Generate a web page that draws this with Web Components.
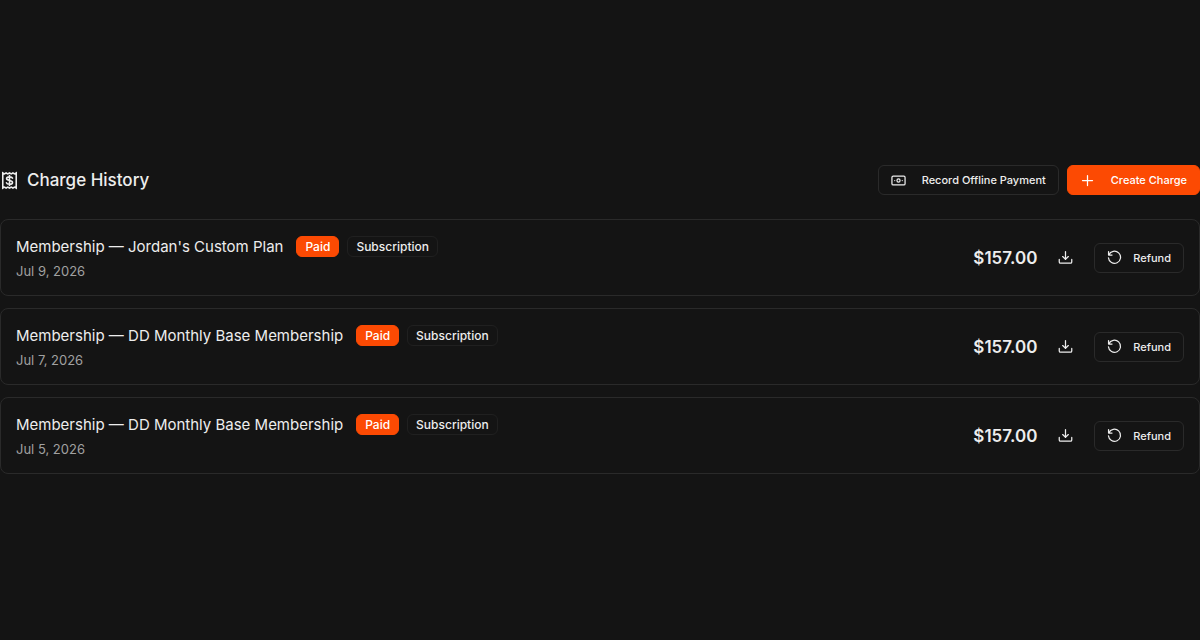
<!DOCTYPE html>
<html lang="en">
<head>
<meta charset="utf-8">
<meta name="viewport" content="width=device-width, initial-scale=1">
<title>Charge History</title>
<style>
	:root {
		--background: #141414;
		--border: #2a2a2a;
		--border-faint: #202020;
		--text: #ededed;
		--muted: #a1a1a1;
		--accent: #fc4a03;
	}

	body {
		margin: 0;
		padding-bottom: 1px;
		min-height: 100vh;
		display: flex;
		flex-direction: column;
		justify-content: center;
		box-sizing: border-box;
		background: var(--background);
		color: var(--text);
		font-family: Inter, "Liberation Sans", sans-serif;
	}
</style>
</head>
<body>

<charge-history>
	<charge-row amount="$157.00" date="Jul 9, 2026">Membership — Jordan's Custom Plan</charge-row>
	<charge-row amount="$157.00" date="Jul 7, 2026">Membership — DD Monthly Base Membership</charge-row>
	<charge-row amount="$157.00" date="Jul 5, 2026">Membership — DD Monthly Base Membership</charge-row>
</charge-history>

<template id="charge-history">
	<style>
		:host {
			display: block;
		}

		header {
			display: flex;
			align-items: center;
			justify-content: space-between;
			margin-bottom: 24px;
		}

		h2 {
			display: flex;
			align-items: center;
			gap: 8px;
			margin: 0;
			font-size: 17px;
			line-height: 24px;
			font-weight: 500;
		}

		.actions {
			--icon-gap: 16px;
			display: flex;
			gap: 8px;
		}

		.list {
			display: flex;
			flex-direction: column;
			gap: 12px;
		}
	</style>

	<header>
		<h2><app-icon name="receipt" size="19"></app-icon>Charge History</h2>
		<div class="actions">
			<app-button icon="cash">Record Offline Payment</app-button>
			<app-button icon="plus" variant="primary">Create Charge</app-button>
		</div>
	</header>
	<div class="list"><slot></slot></div>
</template>

<template id="charge-row">
	<style>
		:host {
			display: flex;
			align-items: center;
			justify-content: space-between;
			box-sizing: border-box;
			padding: 14px 15px;
			border: 1px solid var(--border);
			border-radius: 8px;
		}

		.title {
			display: flex;
			align-items: center;
			gap: 8px;
			font-size: 15px;
			line-height: 25px;
		}

		.name {
			margin-right: 5px;
		}

		time {
			display: block;
			margin-top: 2px;
			color: var(--muted);
			font-size: 13px;
			line-height: 20px;
		}

		.side {
			display: flex;
			align-items: center;
			gap: 13px;
		}

		.amount {
			font-size: 17px;
			line-height: 24px;
			font-weight: 600;
		}
	</style>

	<div>
		<div class="title">
			<span class="name"><slot></slot></span>
			<app-badge variant="primary">Paid</app-badge>
			<app-badge>Subscription</app-badge>
		</div>
		<time></time>
	</div>
	<div class="side">
		<span class="amount"></span>
		<app-button icon="download" variant="ghost" label="Download receipt"></app-button>
		<app-button icon="undo">Refund</app-button>
	</div>
</template>

<template id="app-badge">
	<style>
		:host {
			display: block;
			padding: 2px 8px;
			border: 1px solid var(--border-faint);
			border-radius: 6px;
			font-size: 12px;
			line-height: 15px;
			font-weight: 500;
		}

		:host([variant="primary"]) {
			background: var(--accent);
			border-color: var(--accent);
			color: #fff;
		}
	</style>

	<slot></slot>
</template>

<template id="app-button">
	<style>
		:host {
			display: block;
		}

		button {
			display: flex;
			align-items: center;
			gap: var(--icon-gap, 11px);
			height: 30px;
			box-sizing: border-box;
			padding: 0 12px;
			border: 1px solid var(--border);
			border-radius: 6px;
			background: transparent;
			color: var(--text);
			font: 500 11px/16px Inter, "Liberation Sans", sans-serif;
			cursor: pointer;
		}

		:host([variant="primary"]) button {
			background: var(--accent);
			border-color: var(--accent);
			color: #fff;
		}

		:host([variant="ghost"]) button {
			padding: 0 7px;
			gap: 0;
			border-color: transparent;
		}
	</style>

	<button type="button"><app-icon size="15"></app-icon><slot></slot></button>
</template>

<template id="app-icon">
	<style>
		:host {
			display: block;
			flex: none;
		}

		svg {
			display: block;
			fill: none;
			stroke: currentColor;
			stroke-width: 2;
			stroke-linecap: round;
			stroke-linejoin: round;
		}
	</style>

	<svg viewBox="0 0 24 24" aria-hidden="true"></svg>
</template>

<script>
	const ICONS = {
		receipt: '<path stroke-linejoin="miter" d="M3.5 2.5l2 1.2 2.2-1.2 2.1 1.2L12 2.5l2.2 1.2 2.1-1.2 2.2 1.2 2-1.2v19l-2-1.2-2.2 1.2-2.1-1.2-2.2 1.2-2.2-1.2-2.1 1.2-2.2-1.2-2 1.2z"/><path d="M15.8 9c-.4-1-1.8-1.6-3.8-1.6-2.2 0-3.7.8-3.7 2.2 0 3.4 7.5 1.4 7.5 4.8 0 1.5-1.5 2.3-3.8 2.3-2.1 0-3.5-.7-3.9-1.900M12 5.800v12.400"/>',
		cash: '<rect x="1.5" y="5" width="21" height="14" rx="2"/><circle cx="12" cy="12" r="2.5"/><path d="M6 12h.01M18 12h.01"/>',
		plus: '<path d="M12 4v16M4 12h16"/>',
		download: '<path d="M12 2.500v12.500M7.500 10.500L12 15l4.500-4.500M2 15v4a2 2 0 0 0 2 2h16a2 2 0 0 0 2-2v-4"/>',
		undo: '<path d="M2.500 2.500v5.500H8M3 8A9.700 9.700 0 1 1 2.300 12.500"/>'
	};

	class AppElement extends HTMLElement {
		constructor() {
			super();
			let template = document.getElementById(this.localName);
			this.attachShadow({ mode: "open" });
			this.shadowRoot.appendChild(document.importNode(template.content, true));
		}
	}

	class AppIcon extends AppElement {
		static observedAttributes = ["name", "size"];

		attributeChangedCallback() {
			let svg = this.shadowRoot.querySelector("svg");
			svg.innerHTML = ICONS[this.getAttribute("name")] || "";
			svg.setAttribute("width", this.getAttribute("size"));
			svg.setAttribute("height", this.getAttribute("size"));
		}
	}

	class AppButton extends AppElement {
		connectedCallback() {
			this.shadowRoot.querySelector("app-icon").setAttribute("name", this.getAttribute("icon"));
			if (this.hasAttribute("label")) {
				this.shadowRoot.querySelector("button").setAttribute("aria-label", this.getAttribute("label"));
			}
		}
	}

	class ChargeRow extends AppElement {
		connectedCallback() {
			this.shadowRoot.querySelector("time").textContent = this.getAttribute("date");
			this.shadowRoot.querySelector(".amount").textContent = this.getAttribute("amount");
		}
	}

	customElements.define("app-icon", AppIcon);
	customElements.define("app-badge", class extends AppElement {});
	customElements.define("app-button", AppButton);
	customElements.define("charge-row", ChargeRow);
	customElements.define("charge-history", class extends AppElement {});
</script>
</body>
</html>
